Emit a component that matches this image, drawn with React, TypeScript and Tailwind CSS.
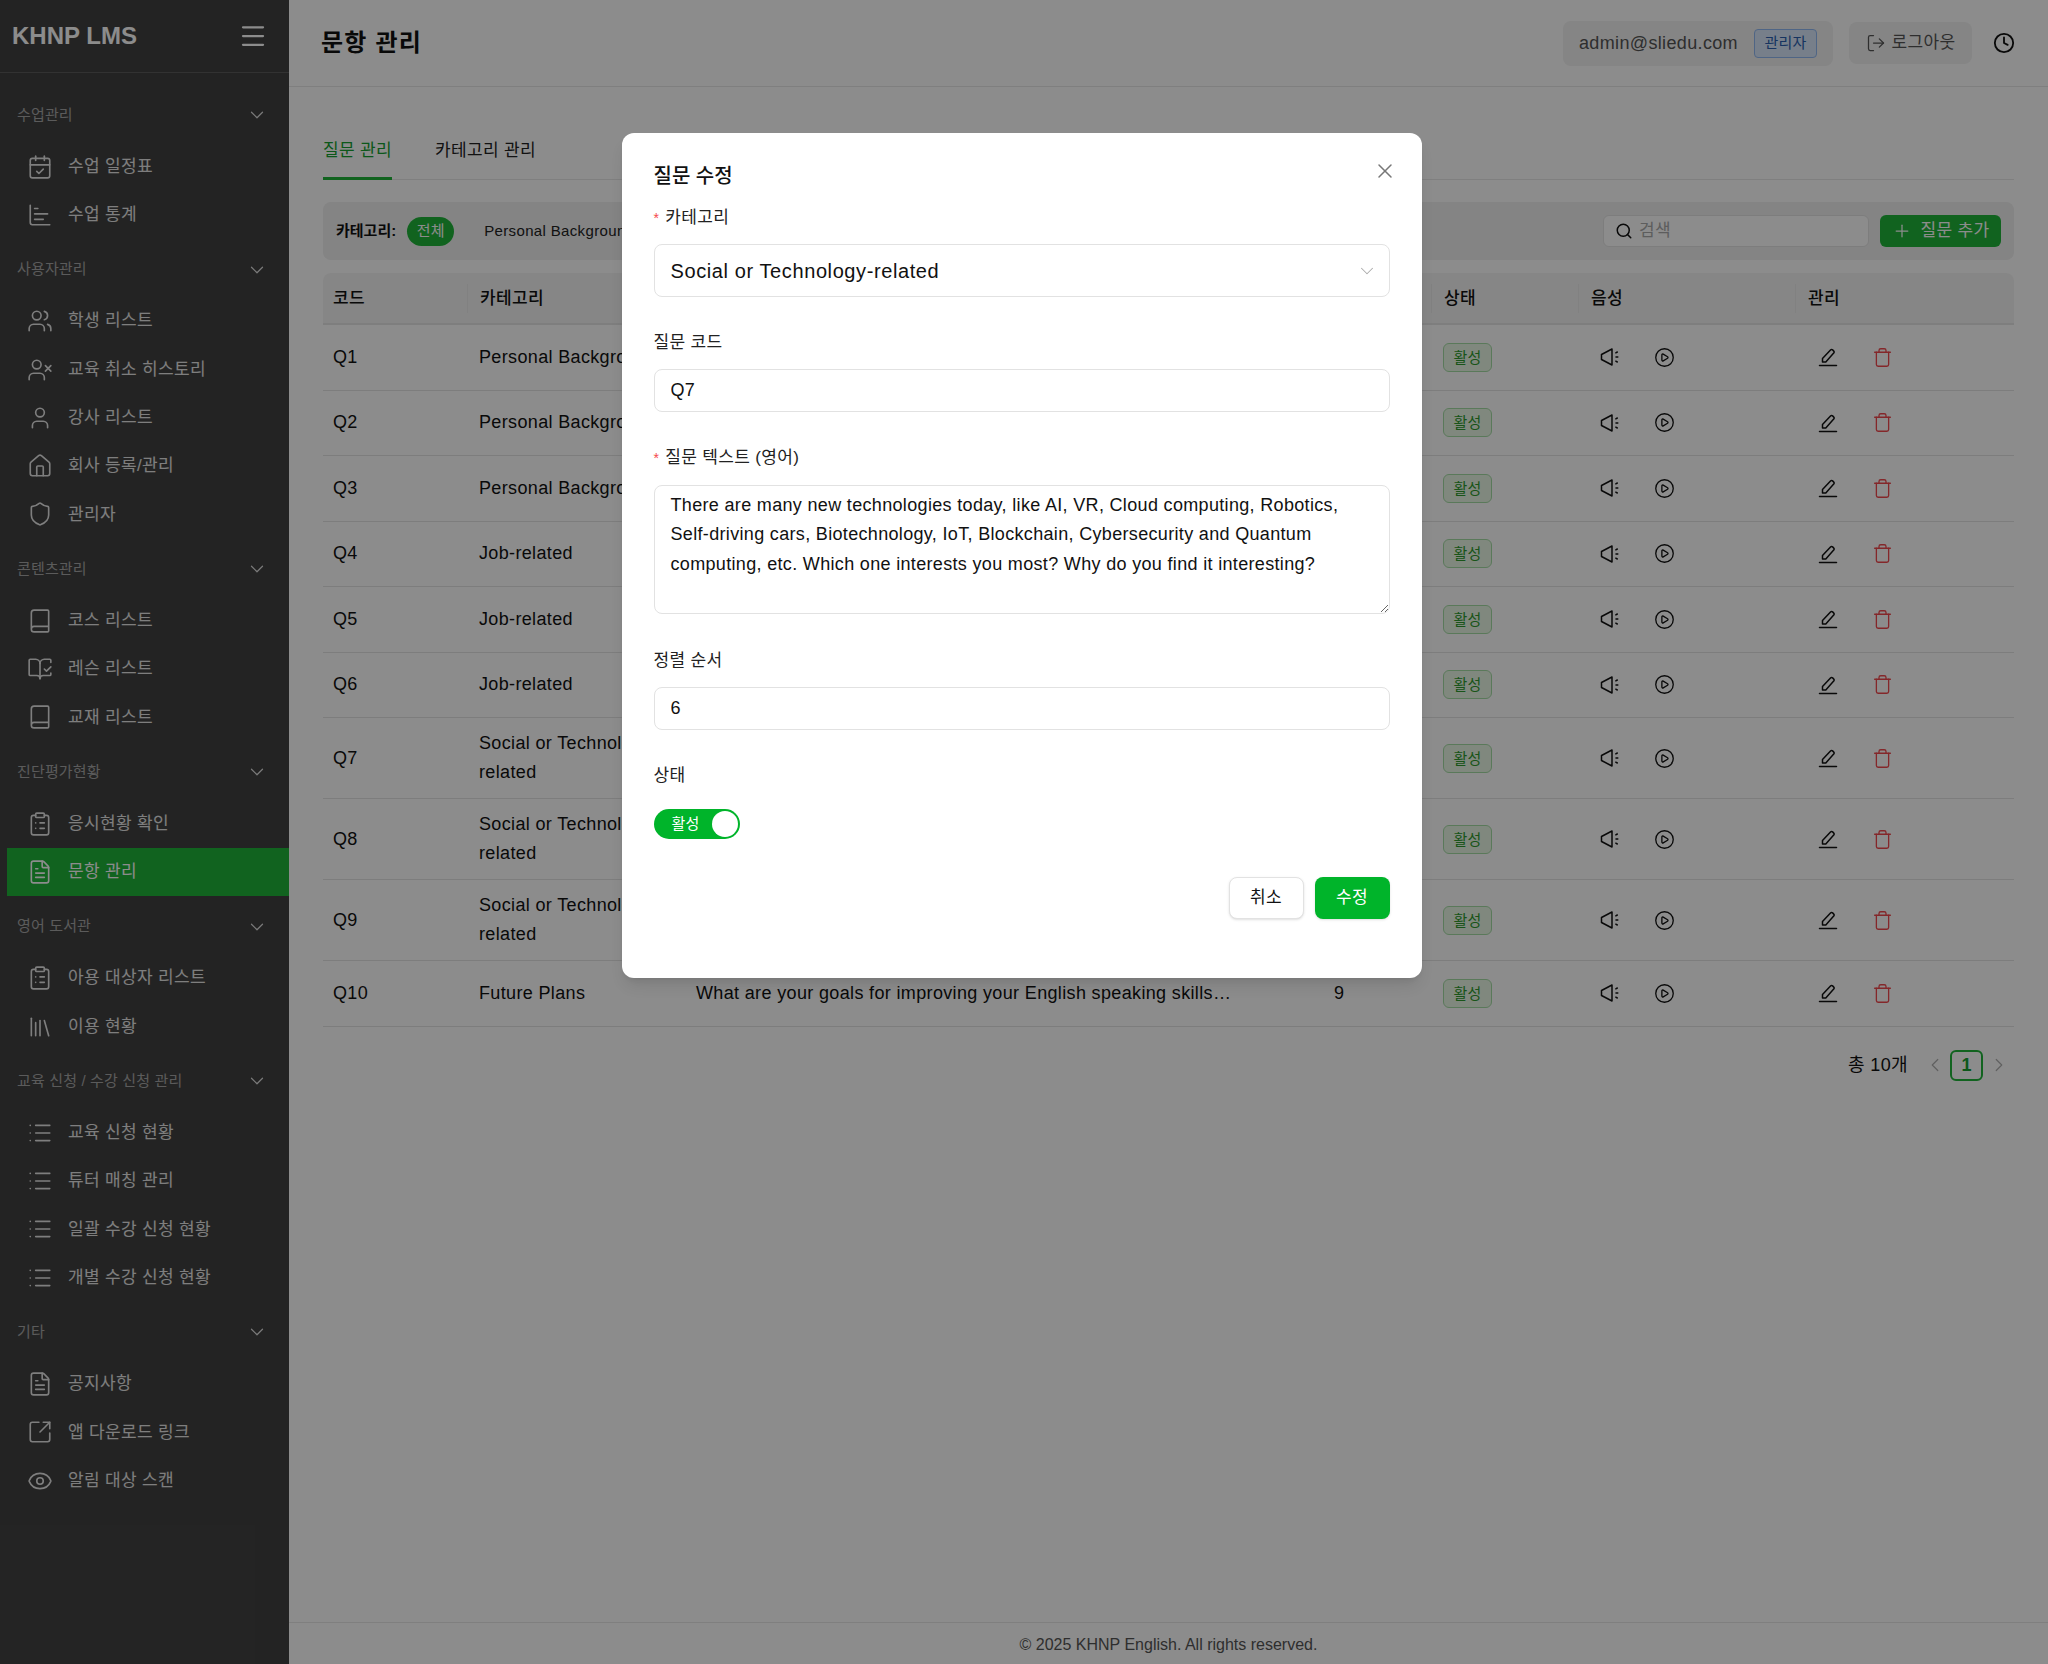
import {
  Book,
  BookOpenCheck,
  CalendarCheck,
  ChartBar,
  ChevronDown,
  ChevronLeft,
  ChevronRight,
  CirclePlay,
  ClipboardList,
  Clock,
  Eye,
  FileText,
  House,
  Library,
  List,
  LogOut,
  Menu,
  Plus,
  Search,
  Shield,
  SquareArrowOutUpRight,
  Trash,
  User,
  UserX,
  Users,
  X,
} from "lucide-react";
import type { ComponentType } from "react";

type IconType = ComponentType<{ size?: number; strokeWidth?: number; className?: string }>;

type NavItem = { label: string; icon: IconType; active?: boolean };
type NavSection = { title: string; items: NavItem[] };

const NAV: NavSection[] = [
  {
    title: "수업관리",
    items: [
      { label: "수업 일정표", icon: CalendarCheck },
      { label: "수업 통계", icon: ChartBar },
    ],
  },
  {
    title: "사용자관리",
    items: [
      { label: "학생 리스트", icon: Users },
      { label: "교육 취소 히스토리", icon: UserX },
      { label: "강사 리스트", icon: User },
      { label: "회사 등록/관리", icon: House },
      { label: "관리자", icon: Shield },
    ],
  },
  {
    title: "콘텐츠관리",
    items: [
      { label: "코스 리스트", icon: Book },
      { label: "레슨 리스트", icon: BookOpenCheck },
      { label: "교재 리스트", icon: Book },
    ],
  },
  {
    title: "진단평가현황",
    items: [
      { label: "응시현황 확인", icon: ClipboardList },
      { label: "문항 관리", icon: FileText, active: true },
    ],
  },
  {
    title: "영어 도서관",
    items: [
      { label: "아용 대상자 리스트", icon: ClipboardList },
      { label: "이용 현황", icon: Library },
    ],
  },
  {
    title: "교육 신청 / 수강 신청 관리",
    items: [
      { label: "교육 신청 현황", icon: List },
      { label: "튜터 매칭 관리", icon: List },
      { label: "일괄 수강 신청 현황", icon: List },
      { label: "개별 수강 신청 현황", icon: List },
    ],
  },
  {
    title: "기타",
    items: [
      { label: "공지사항", icon: FileText },
      { label: "앱 다운로드 링크", icon: SquareArrowOutUpRight },
      { label: "알림 대상 스캔", icon: Eye },
    ],
  },
];

const COLS = "grid grid-cols-[144px_217px_638px_109px_147px_217px_219px]";

const ROWS = [
  { code: "Q1", cat: "Personal Background", text: "Can you tell me about yourself and your family?", order: 0 },
  { code: "Q2", cat: "Personal Background", text: "What do you like to do in your free time?", order: 1 },
  { code: "Q3", cat: "Personal Background", text: "Where did you grow up and what was it like?", order: 2 },
  { code: "Q4", cat: "Job-related", text: "What is your current job and main responsibilities?", order: 3 },
  { code: "Q5", cat: "Job-related", text: "What do you find most challenging about your work?", order: 4 },
  { code: "Q6", cat: "Job-related", text: "How do you use English at your workplace?", order: 5 },
  { code: "Q7", cat: "Social or Technology-related", text: "There are many new technologies today, like AI, VR…", order: 6 },
  { code: "Q8", cat: "Social or Technology-related", text: "How has technology changed the way people work?", order: 7 },
  { code: "Q9", cat: "Social or Technology-related", text: "What social issue do you think is most important?", order: 8 },
  { code: "Q10", cat: "Future Plans", text: "What are your goals for improving your English speaking skills…", order: 9 },
];

function Speaker() {
  return (
    <svg width="20" height="20" viewBox="0 0 20 20" fill="none" stroke="currentColor" strokeWidth="1.5" strokeLinejoin="round" strokeLinecap="round">
      <path d="M1.5 7.5 V12.5 L12 18 V2 Z" />
      <path d="M15.8 5.8 L17.3 5 M16 10 H17.8 M15.8 14.2 L17.3 15" />
    </svg>
  );
}

function Pen() {
  return (
    <svg width="20" height="20" viewBox="0 0 20 20" fill="none" stroke="currentColor" strokeWidth="1.5" strokeLinejoin="round" strokeLinecap="round">
      <path d="M1.5 18.5 H18.5" />
      <path d="M4.5 15 V11.5 L12.5 3 C13.2 2.3 14 2.3 14.6 2.9 L15.8 4.1 C16.4 4.7 16.4 5.4 15.7 6.1 L7.8 15 Z" />
    </svg>
  );
}

function Sidebar() {
  return (
    <aside className="w-[289px] shrink-0 bg-[#414141] text-white">
      <div className="h-[73px] flex items-center justify-between pl-3 pr-[21px] border-b border-[#5c5c5c]">
        <span className="text-2xl font-bold">KHNP LMS</span>
        <Menu size={30} strokeWidth={1.8} />
      </div>
      <nav className="pt-[22px]">
        {NAV.map((section) => (
          <div key={section.title} className="mb-[10.5px]">
            <div className="h-10 mb-[7.5px] pl-[17px] pr-[21px] flex items-center justify-between text-[15px] text-[#a6a6a6] tracking-[0.01em]">
              <span>{section.title}</span>
              <ChevronDown size={22} strokeWidth={1.3} className="text-[#e0e0e0]" />
            </div>
            {section.items.map((item) => (
              <div
                key={item.label}
                className={
                  item.active
                    ? "ml-[7px] h-[48.3px] flex items-center pl-5 bg-[#1fb53a] text-white"
                    : "ml-[7px] h-[48.3px] flex items-center pl-5 text-[#e6e6e6]"
                }
              >
                <span className="w-[26px] flex justify-center">
                  <item.icon size={26} strokeWidth={1.5} />
                </span>
                <span className="ml-[15px] text-[17px] tracking-[0.02em]">{item.label}</span>
              </div>
            ))}
          </div>
        ))}
      </nav>
    </aside>
  );
}

function Header() {
  return (
    <header className="h-[87px] shrink-0 flex items-center justify-between pl-8 pr-[33px] border-b border-[#e8e8e8]">
      <h1 className="text-2xl font-semibold tracking-[0.05em] text-[#111]">문항 관리</h1>
      <div className="flex items-center">
        <div className="h-[45px] w-[270px] pl-4 rounded-lg bg-[#f2f2f2] flex items-center">
          <span className="text-lg tracking-[0.35px] text-[#555]">admin@sliedu.com</span>
          <span className="ml-auto mr-4 h-[29px] w-[63px] rounded border border-[#91b9f2] bg-[#d9e8fb] text-[#2a5fb0] text-[15px] tracking-[0.01em] flex items-center justify-center">
            관리자
          </span>
        </div>
        <div className="ml-4 h-[42px] w-[123px] rounded-lg bg-[#f2f2f2] text-[#555] flex items-center justify-center gap-[6px]">
          <LogOut size={20} strokeWidth={1.5} />
          <span className="text-[17px] tracking-[0.02em]">로그아웃</span>
        </div>
        <Clock size={22} strokeWidth={2} className="ml-[21px] text-[#111]" />
      </div>
    </header>
  );
}

function Toolbar() {
  return (
    <div className="mt-[22px] h-[58px] rounded-lg bg-[#f0f0f0] flex items-center pl-[13px] pr-[13px] overflow-hidden">
      <span className="text-[15px] font-bold text-[#111]">카테고리:</span>
      <span className="ml-[11px] h-[29px] w-[47px] rounded-full bg-[#1fb53a] text-white text-[15px] tracking-[0.01em] flex items-center justify-center">
        전체
      </span>
      <span className="ml-[30px] text-[15px] tracking-[0.35px] text-[#222]">Personal Background</span>
      <div className="ml-auto w-[266px] h-8 rounded-md bg-white border border-[#e3e3e3] flex items-center pl-[11px]">
        <Search size={18} strokeWidth={2} className="text-[#111]" />
        <span className="ml-[6px] text-[17px] text-[#aaa] tracking-[0.02em]">검색</span>
      </div>
      <button className="ml-[11px] w-[121px] h-8 rounded-md bg-[#1fb53a] text-white flex items-center justify-center gap-[9px]">
        <Plus size={20} strokeWidth={1.5} />
        <span className="text-[17px] tracking-[0.02em]">질문 추가</span>
      </button>
    </div>
  );
}

function QuestionTable() {
  return (
    <div className="mt-[13px] text-[#111]">
      <div className={`${COLS} h-[52px] pt-[1px] rounded-t-lg bg-[#f5f5f5] border-b-2 border-[#e5e5e5] items-center text-[17px] font-medium tracking-[0.02em]`}>
        {["코드", "카테고리", "질문", "순서", "상태", "음성", "관리"].map((name, i) => (
          <div key={name} className={i === 0 ? "pl-[10px] h-[29px] flex items-center" : "pl-3 h-[29px] flex items-center border-l border-[#ebebeb]"}>
            {name}
          </div>
        ))}
      </div>
      {ROWS.map((row) => (
        <div
          key={row.code}
          className={`${COLS} ${row.cat.startsWith("Social") ? "h-[81px]" : "h-[65.5px]"} border-b border-[#e3e3e3] items-center text-lg tracking-[0.35px] leading-[29px]`}
        >
          <div className="pl-[10px]">{row.code}</div>
          <div className="pl-3 pr-2">{row.cat}</div>
          <div className="pl-3 pr-3 whitespace-nowrap">{row.text}</div>
          <div className="pl-3">{row.order}</div>
          <div className="pl-3">
            <span className="h-[29px] w-[49px] rounded-md border border-[#a5dca5] bg-[#eaf8e6] text-[#2e9a2e] text-[15px] tracking-[0.01em] flex items-center justify-center">
              활성
            </span>
          </div>
          <div className="pl-3 flex gap-[14px]">
            <span className="w-10 h-[42px] flex items-center justify-center">
              <Speaker />
            </span>
            <span className="w-10 h-[42px] flex items-center justify-center">
              <CirclePlay size={21} strokeWidth={1.5} />
            </span>
          </div>
          <div className="pl-3 flex gap-[14px]">
            <span className="w-[42px] h-[42px] flex items-center justify-center">
              <Pen />
            </span>
            <span className="w-10 h-[42px] -ml-[1px] flex items-center justify-center text-[#f0484d]">
              <Trash size={21} strokeWidth={1.5} />
            </span>
          </div>
        </div>
      ))}
    </div>
  );
}

function Pagination() {
  return (
    <div className="mt-[23px] flex items-center justify-end pr-1">
      <span className="text-lg text-[#111] tracking-[0.02em]">총 10개</span>
      <ChevronLeft size={22} strokeWidth={1.3} className="ml-4 text-[#b0b0b0]" />
      <span className="ml-1 w-[33px] h-[31px] rounded-md border-2 border-[#1fb53a] text-[#16a030] text-lg font-semibold flex items-center justify-center">
        1
      </span>
      <ChevronRight size={22} strokeWidth={1.3} className="ml-[5px] text-[#b0b0b0]" />
    </div>
  );
}

function Label({ text, required }: { text: string; required?: boolean }) {
  return (
    <label className="block h-6 text-[17px] leading-6 text-[#222] tracking-[0.02em]">
      {required && <span className="text-[#f5484d] mr-[6px] text-sm">*</span>}
      {text}
    </label>
  );
}

function EditModal() {
  return (
    <div className="absolute inset-0 bg-black/45 flex justify-center items-start pt-[133px] pr-[5px]">
      <div className="relative w-[800px] h-[845px] rounded-xl bg-white px-8 text-[#111] shadow-lg">
        <X size={24} strokeWidth={1.5} className="absolute top-[26px] right-[25px] text-[#777]" />
        <h2 className="pt-[29px] h-[73px] text-[20px] leading-7 font-medium">질문 수정</h2>
        <Label text="카테고리" required />
        <div className="mt-[14px] h-[53px] rounded-lg border border-[#e2e2e2] flex items-center justify-between pl-4 pr-[11px] text-xl tracking-[0.6px]">
          Social or Technology-related
          <ChevronDown size={22} strokeWidth={1.1} className="text-[#aaa]" />
        </div>
        <div className="mt-[34px]">
          <Label text="질문 코드" />
        </div>
        <input
          readOnly
          value="Q7"
          className="mt-[14px] block w-full h-[43px] rounded-lg border border-[#e2e2e2] px-4 text-lg tracking-[0.35px] outline-none"
        />
        <div className="mt-[34px]">
          <Label text="질문 텍스트 (영어)" required />
        </div>
        <textarea
          readOnly
          value="There are many new technologies today, like AI, VR, Cloud computing, Robotics, Self-driving cars, Biotechnology, IoT, Blockchain, Cybersecurity and Quantum computing, etc. Which one interests you most? Why do you find it interesting?"
          className="mt-[15px] block w-full h-[129px] rounded-lg border border-[#e2e2e2] px-4 py-[5px] text-lg tracking-[0.33px] leading-[29.3px] outline-none resize-y"
        />
        <div className="mt-[35px]">
          <Label text="정렬 순서" />
        </div>
        <input
          readOnly
          value="6"
          className="mt-[14px] block w-full h-[43px] rounded-lg border border-[#e2e2e2] px-4 text-lg tracking-[0.35px] outline-none"
        />
        <div className="mt-[34px]">
          <Label text="상태" />
        </div>
        <div className="mt-[21px] w-[86px] h-[30px] rounded-full bg-[#00b42a] flex items-center justify-between pl-[18px] pr-[2px] text-[15px] text-white">
          <span className="tracking-[0.01em]">활성</span>
          <span className="w-[26px] h-[26px] rounded-full bg-white" />
        </div>
        <div className="mt-[38px] flex justify-end gap-[11px]">
          <button className="w-[75px] h-[42px] rounded-lg bg-white border border-[#e2e2e2] text-[17px] tracking-[0.02em] shadow-sm">취소</button>
          <button className="w-[75px] h-[42px] rounded-lg bg-[#00b42a] text-white text-[17px] tracking-[0.02em] shadow-sm">수정</button>
        </div>
      </div>
    </div>
  );
}

export default function App() {
  return (
    <div className="relative w-[2048px] h-[1664px] overflow-hidden flex bg-white font-['Liberation_Sans','Noto_Sans_CJK_KR',sans-serif]">
      <Sidebar />
      <main className="flex-1 flex flex-col min-w-0">
        <Header />
        <div className="flex-1 pl-[34px] pr-[34px]">
          <div className="pt-[51px] h-[93px] flex gap-[43px] border-b border-[#e8e8e8] text-[17px] tracking-[0.02em]">
            <span className="h-[42px] w-[69px] whitespace-nowrap border-b-[3px] border-[#1fb53a] text-[#16a030]">질문 관리</span>
            <span className="text-[#222] whitespace-nowrap">카테고리 관리</span>
          </div>
          <Toolbar />
          <QuestionTable />
          <Pagination />
        </div>
        <footer className="h-[42px] shrink-0 pt-[2px] border-t border-[#e8e8e8] flex items-center justify-center text-base text-[#555]">
          © 2025 KHNP English. All rights reserved.
        </footer>
      </main>
      <EditModal />
    </div>
  );
}
